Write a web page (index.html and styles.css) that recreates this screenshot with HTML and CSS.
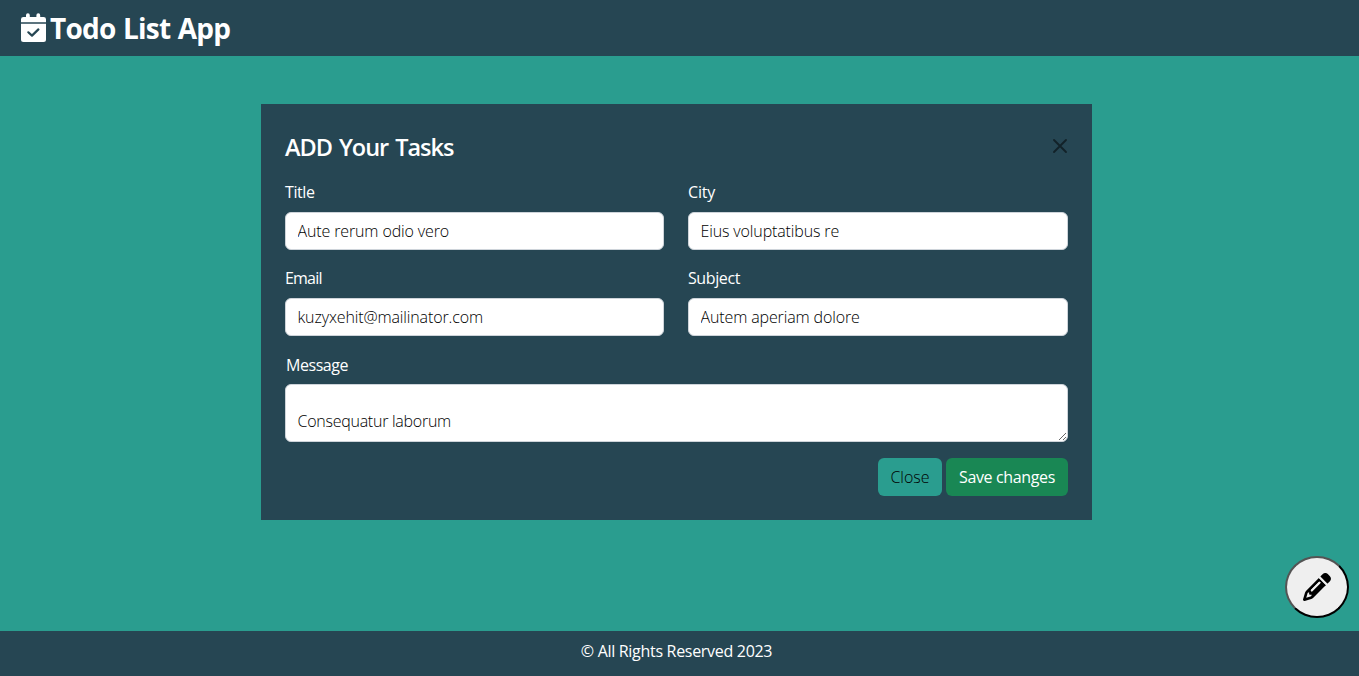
FILE: index.html
```html
<!DOCTYPE html>
<html lang="en">
<head>
<meta charset="utf-8">
<title>Todo List App</title>
<link rel="stylesheet" href="styles.css">
</head>
<body>
<header class="navbar">
  <svg class="brand-icon" viewBox="0 0 26 30" aria-hidden="true">
    <path fill="#fff" d="M1 9.300V6.200Q1 4 3.500 4H6V2.200a1.900 1.900 0 0 1 3.800 0V4h6.600V2.200a1.900 1.900 0 0 1 3.800 0V4h3.300Q26 4 26 6.200V9.300zM1 10.700H26V26.500Q26 29 23.500 29H3.500Q1 29 1 26.500z"/>
    <path fill="none" stroke="#264653" stroke-width="2.200" stroke-linecap="round" stroke-linejoin="round" d="M8.300 19.300l3.700 3.300 6.400-6.200"/>
  </svg>
  <h1 class="brand">Todo List App</h1>
</header>
<main class="page">
  <form class="card">
    <div class="card-head">
      <h2 class="card-title">ADD Your Tasks</h2>
      <button class="dismiss" type="button" aria-label="Dismiss">
        <svg viewBox="0 0 16 16"><path d="M2 2l12 12M14 2L2 14" fill="none" stroke="#000" stroke-width="1.900" stroke-linecap="round"/></svg>
      </button>
    </div>
    <div class="fields">
      <div class="field"><label class="label l-title" for="title">Title</label><input class="control" id="title" value="Aute rerum odio vero"></div>
      <div class="field"><label class="label l-city" for="city">City</label><input class="control" id="city" value="Eius voluptatibus re"></div>
      <div class="field"><label class="label l-email" for="email">Email</label><input class="control" id="email" value="kuzyxehit@mailinator.com"></div>
      <div class="field"><label class="label l-subject" for="subject">Subject</label><input class="control" id="subject" value="Autem aperiam dolore"></div>
    </div>
    <div class="field message">
      <label class="label l-message" for="message">Message</label>
      <textarea class="control area" id="message">

Consequatur laborum</textarea>
    </div>
    <div class="actions">
      <button class="btn btn-close" type="button">Close</button>
      <button class="btn btn-save" type="button">Save changes</button>
    </div>
  </form>
</main>
<button class="fab" type="button" aria-label="Edit">
  <svg viewBox="0 0 512 512"><path d="M410.300 231l11.300-11.300-33.900-33.900-62.100-62.100L291.700 89.800l-11.300 11.300-22.600 22.600L58.600 322.900c-10.400 10.400-18 23.300-22.200 37.400L1 480.700c-2.500 8.400-.2 17.500 6.100 23.700s15.300 8.500 23.700 6.100l120.300-35.400c14.100-4.200 27-11.800 37.400-22.200L387.700 253.700 410.300 231zM160 399.400l-9.100 22.700c-4 3.100-8.500 5.400-13.300 6.900L59.400 452l23-78.100c1.400-4.900 3.800-9.400 6.900-13.300l22.700-9.100v32c0 8.800 7.200 16 16 16h32zM362.700 18.700L348.300 33.200 325.700 55.800 314.300 67.100l33.900 33.900 62.100 62.100 33.900 33.900 11.300-11.300 22.600-22.600 14.500-14.500c25-25 25-65.500 0-90.500L453.300 18.700c-25-25-65.500-25-90.500 0zm-47.400 168l-144 144c-6.200 6.200-16.400 6.200-22.600 0s-6.200-16.400 0-22.600l144-144c6.200-6.200 16.400-6.200 22.600 0s6.200 16.400 0 22.600z"/><path d="M298 73l141 141" fill="none" stroke="#efefef" stroke-width="36"/><path d="M160 319L300 179" stroke="#efefef" stroke-width="36" stroke-linecap="round"/></svg>
</button>
<footer class="footer"><span class="copyright">© All Rights Reserved 2023</span></footer>
</body>
</html>
```
FILE: styles.css
```css
* { box-sizing: border-box; }
body {
  margin: 0;
  height: 676px;
  display: flex;
  flex-direction: column;
  overflow: hidden;
  background: #2a9d8f;
  color: #fff;
  font: 16px/24px "Open Sans", "Noto Sans", sans-serif;
}
.navbar {
  height: 56px;
  flex: none;
  display: flex;
  align-items: center;
  padding-left: 20px;
  background: #264653;
}
.brand-icon { width: 26px; height: 30px; flex: none; }
.brand { margin: 0 0 0 4px; font-size: 28px; line-height: 34px; font-weight: 700; letter-spacing: -.78px; word-spacing: 1px; white-space: nowrap; }
.page { flex: 1; padding: 48px 0 0 261px; }
.card { width: 831px; height: 416px; padding: 24px; background: #264653; }
.card-head { display: flex; justify-content: space-between; height: 52px; }
.card-title { margin: 4px 0 0; font-size: 23.500px; line-height: 31px; font-weight: 600; letter-spacing: -1.030px; word-spacing: 2px; white-space: nowrap; }
.dismiss { width: 16px; height: 16px; margin-top: 10px; padding: 0; border: 0; background: none; opacity: .5; }
.dismiss svg { display: block; width: 16px; height: 16px; }
.fields { display: grid; grid-template-columns: 379px 380px; gap: 16px 24px; }
.field { display: flex; flex-direction: column; align-items: flex-start; }
.label { height: 32px; white-space: nowrap; }
.l-title { letter-spacing: -.4px; }
.l-city { letter-spacing: -.2px; }
.l-email { letter-spacing: -.8px; }
.l-subject { letter-spacing: -.4px; }
.l-message { padding: 1px 0 0 1px; letter-spacing: -.45px; }
.control {
  width: 100%;
  height: 38px;
  padding: 6px 12px 6px 11.500px;
  border: 1px solid #ced4da;
  border-radius: 6px;
  background: #fff;
  color: #000;
  font: inherit;
  font-weight: 300;
  letter-spacing: -.13px;
}
.message { margin-top: 16px; }
.area { height: 58px; padding-top: 0; resize: vertical; overflow: hidden; display: block; letter-spacing: -.26px; }
.actions { display: flex; justify-content: flex-end; gap: 4px; margin-top: 16px; }
.btn { height: 38px; padding: 0; border: 0; border-radius: 6px; font: inherit; white-space: nowrap; }
.btn-close { width: 64px; background: #2a9d8f; color: #000; font-weight: 350; }
.btn-save { width: 122px; background: #198754; color: #fff; letter-spacing: -.36px; }
.fab {
  position: fixed;
  left: 1285px;
  top: 556px;
  width: 64px;
  height: 62px;
  padding: 0;
  display: flex;
  align-items: center;
  justify-content: center;
  border: 2px outset #000;
  border-radius: 50%;
  background: #efefef;
}
.fab svg { width: 28px; height: 28px; }
.footer { flex: none; height: 45px; padding: 8px 6px 0 0; background: #264653; text-align: center; letter-spacing: -.3px; }
```
